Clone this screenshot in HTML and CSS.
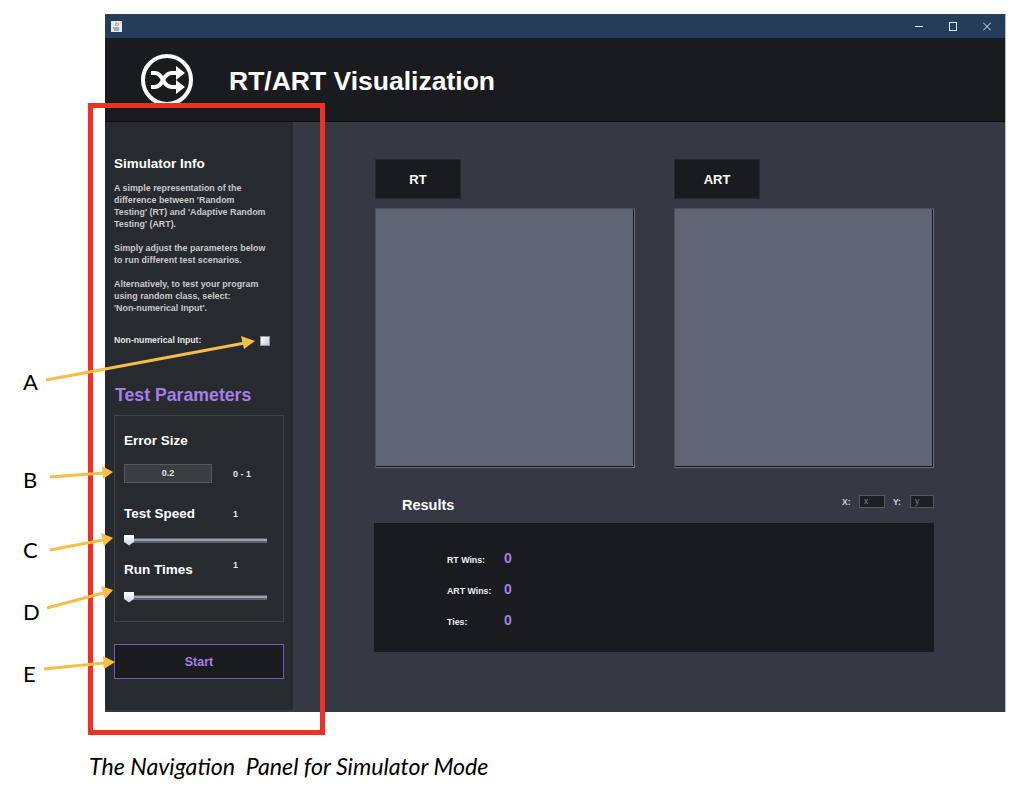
FILE: index.html
```html
<!DOCTYPE html>
<html lang="en">
<head>
    <meta charset="UTF-8">
    <meta name="viewport" content="width=device-width, initial-scale=1.0">
    <title>The Navigation Panel for Simulator Mode</title>
    <link rel="stylesheet" href="styles.css">
</head>
<body>
    <div class="page">
        <div class="window">
            <div class="titlebar">
                <svg class="java-icon" width="11" height="11" viewBox="0 0 11 11">
                    <rect width="11" height="11" fill="#e6e9ee"/>
                    <path d="M5 1c1 2-1 2 0 4M7 2c1 2-1 2 0 3" stroke="#d9792b" fill="none"/>
                    <path d="M2 7h6M3 9h5" stroke="#4a6fa5"/>
                </svg>
                <div class="window-controls">
                    <svg width="8" height="9" viewBox="0 0 8 9"><path d="M0 4.5h8" stroke="#dfe5ec"/></svg>
                    <svg width="8" height="9" viewBox="0 0 8 9"><rect x=".5" y=".5" width="7" height="8" fill="none" stroke="#dfe5ec"/></svg>
                    <svg width="8" height="9" viewBox="0 0 8 9"><path d="M0 .5l8 8M8 .5l-8 8" stroke="#dfe5ec"/></svg>
                </div>
            </div>

            <div class="app-header">
                <svg class="logo" width="52" height="52" viewBox="0 0 52 52">
                    <circle cx="26" cy="26" r="24" fill="none" stroke="#fff" stroke-width="4"/>
                    <path d="M10 19h4c4 0 6 3 8 7s4 7 9 7h5M10 33h4c4 0 6-3 8-7s4-7 9-7h5" fill="none" stroke="#fff" stroke-width="4"/>
                    <path d="M35 12l9 7-9 7zM35 26l9 7-9 7z" fill="#fff"/>
                </svg>
                <h1>RT/ART Visualization</h1>
            </div>

            <div class="app-body">
                <div class="sidebar">
                    <h2>Simulator Info</h2>
                    <div class="info">
                        <p>A simple representation of the<br>difference between 'Random<br>Testing' (RT) and 'Adaptive Random<br>Testing' (ART).</p>
                        <p>Simply adjust the parameters below<br>to run different test scenarios.</p>
                        <p>Alternatively, to test your program<br>using random class, select:<br>'Non-numerical Input'.</p>
                    </div>
                    <div class="check-row">
                        <span>Non-numerical Input:</span>
                        <div class="checkbox"></div>
                    </div>

                    <h3>Test Parameters</h3>
                    <div class="param-box">
                        <div class="param-label">Error Size</div>
                        <div class="error-row">
                            <div class="error-input">0.2</div>
                            <span class="param-value">0 - 1</span>
                        </div>
                        <div class="param-row speed-row">
                            <div class="param-label">Test Speed</div>
                            <span class="param-value">1</span>
                        </div>
                        <div class="slider speed-slider"><div class="thumb"></div></div>
                        <div class="param-row runs-row">
                            <div class="param-label">Run Times</div>
                            <span class="param-value">1</span>
                        </div>
                        <div class="slider runs-slider"><div class="thumb"></div></div>
                    </div>
                    <button class="start-btn">Start</button>
                </div>

                <div class="main">
                    <div class="boards">
                        <div class="board">
                            <div class="board-tab">RT</div>
                            <div class="board-canvas"></div>
                        </div>
                        <div class="board">
                            <div class="board-tab">ART</div>
                            <div class="board-canvas"></div>
                        </div>
                    </div>
                    <div class="results-head">
                        <div class="results-title">Results</div>
                        <div class="coords">
                            <span>X:</span>
                            <div class="coord-input">x</div>
                            <span>Y:</span>
                            <div class="coord-input coord-y">y</div>
                        </div>
                    </div>
                    <div class="results">
                        <div class="result-row"><span class="result-label">RT Wins:</span><span class="result-value">0</span></div>
                        <div class="result-row"><span class="result-label">ART Wins:</span><span class="result-value">0</span></div>
                        <div class="result-row"><span class="result-label">Ties:</span><span class="result-value">0</span></div>
                    </div>
                </div>
            </div>
        </div>

        <div class="caption">The Navigation&nbsp; Panel for Simulator Mode</div>

        <!-- figure annotations drawn over the screenshot -->
        <div class="red-frame"></div>
        <svg class="arrows" width="1020" height="796" viewBox="0 0 1020 796">
            <g stroke="#f8bd45" stroke-width="3" fill="none">
                <path d="M46 380L245 343"/>
                <path d="M50 477L103 473"/>
                <path d="M50 550L103 540"/>
                <path d="M47 608L103 593"/>
                <path d="M44 669L104 663"/>
            </g>
            <g fill="#f8bd45">
                <path d="M255 341L241 336L244 349z"/>
                <path d="M113 472L102 466L103 479z"/>
                <path d="M113 538L101 533L104 546z"/>
                <path d="M113 590L101 586L105 599z"/>
                <path d="M115 662L103 656L104 669z"/>
            </g>
        </svg>
        <div class="marker marker-a">A</div>
        <div class="marker marker-b">B</div>
        <div class="marker marker-c">C</div>
        <div class="marker marker-d">D</div>
        <div class="marker marker-e">E</div>
    </div>
</body>
</html>
```

FILE: styles.css
```css
* {
    box-sizing: border-box;
}
body {
    margin: 0;
    background-color: #fff;
    font-family: 'Liberation Sans', Arial, sans-serif;
}
h1, h2, h3, p {
    margin: 0;
}
.page {
    position: relative;
    width: 1020px;
    height: 796px;
    padding: 14px 0 0 89px;
    overflow: hidden;
}

/* app window */
.window {
    width: 901px;
    height: 698px;
    margin-left: 16px;
    border-top: 1px solid #3c3f44;
    border-right: 1px solid #b4bcc6;
    background-color: #363944;
}
.titlebar {
    display: flex;
    align-items: center;
    justify-content: space-between;
    height: 23px;
    padding: 0 14px 0 6px;
    background-color: #233d5b;
}
.java-icon {
    display: block;
}
.window-controls {
    display: flex;
    gap: 26px;
}
.window-controls svg {
    display: block;
}
.app-header {
    display: flex;
    align-items: center;
    height: 84px;
    padding: 0 0 0 36px;
    background-color: #1a1b1f;
    border-bottom: 1px solid #0d0e10;
}
.logo {
    display: block;
}
h1 {
    margin: 2px 0 0 36px;
    color: #fff;
    font-size: 26.5px;
    font-weight: bold;
    line-height: 32px;
}
.app-body {
    display: flex;
    align-items: flex-start;
}

/* sidebar */
.sidebar {
    width: 188px;
    height: 588px;
    padding: 34px 0 0 9px;
    background-color: #272a2f;
}
h2 {
    color: #fff;
    font-size: 13.5px;
    font-weight: bold;
    line-height: 16px;
}
.info {
    display: flex;
    flex-direction: column;
    gap: 12px;
    margin-top: 10px;
    color: #c8c9cb;
    font-size: 8.9px;
    font-weight: bold;
    line-height: 12px;
}
.check-row {
    display: flex;
    align-items: center;
    justify-content: space-between;
    width: 156px;
    height: 12px;
    margin-top: 20px;
    color: #e4e5e7;
    font-size: 8.7px;
    font-weight: bold;
}
.checkbox {
    width: 10px;
    height: 10px;
    margin-top: 2px;
    border: 1px solid #8e96a4;
    background-image: linear-gradient(to bottom right, #fff, #bfc8d8);
}
h3 {
    margin: 38px 0 9px 1px;
    color: #a57fe6;
    font-size: 17.7px;
    font-weight: bold;
    line-height: 22px;
}
.param-box {
    width: 170px;
    height: 207px;
    padding: 17px 0 0 9px;
    border: 1px solid #3f4246;
}
.param-label {
    width: 109px;
    color: #fff;
    font-size: 13.5px;
    font-weight: bold;
    line-height: 16px;
}
.param-value {
    color: #e4e5e7;
    font-size: 9px;
    font-weight: bold;
    line-height: 10px;
}
.error-row {
    display: flex;
    align-items: center;
    margin-top: 15px;
}
.error-input {
    width: 88px;
    height: 19px;
    margin-right: 21px;
    border: 1px solid #55585c;
    background-color: #3c3d41;
    color: #e4e5e7;
    font-size: 9px;
    font-weight: bold;
    line-height: 17px;
    text-align: center;
}
.param-row {
    display: flex;
}
.speed-row {
    align-items: center;
    margin-top: 23px;
}
.runs-row {
    align-items: flex-start;
    margin-top: 15px;
}
.runs-row .param-value {
    margin-top: -2px;
}
.slider {
    display: flex;
    align-items: center;
    width: 143px;
    height: 14px;
    background-image: linear-gradient(#5b6370 0 1px, #9aa3af 1px 3px, #5b6370 3px 5px);
    background-size: 100% 5px;
    background-position: 0 center;
    background-repeat: no-repeat;
}
.speed-slider {
    margin-top: 11px;
}
.runs-slider {
    margin-top: 12px;
}
.thumb {
    width: 10px;
    height: 11px;
    background-image: linear-gradient(#fff, #c9d0dc);
    clip-path: polygon(0 0, 100% 0, 100% 65%, 50% 100%, 0 65%);
}
.start-btn {
    display: block;
    width: 170px;
    height: 35px;
    margin-top: 22px;
    padding: 0;
    border: 1px solid #7b56b8;
    background-color: #1a1b1f;
    color: #a57fe6;
    font-family: inherit;
    font-size: 12.5px;
    font-weight: bold;
}

/* main area */
.main {
    width: 712px;
    padding: 37px 0 0 81px;
}
.boards {
    display: flex;
    gap: 39px;
    margin-left: 1px;
}
.board {
    width: 260px;
}
.board-tab {
    width: 86px;
    height: 40px;
    border: 1px solid #26282d;
    background-color: #1a1b1f;
    color: #fff;
    font-size: 13px;
    font-weight: bold;
    line-height: 39px;
    text-align: center;
}
.board-canvas {
    height: 260px;
    margin-top: 9px;
    border: 1px solid #4a4e5a;
    border-right-color: #6a707e;
    border-bottom-color: #6a707e;
    box-shadow: inset -1px -1px 0 #14161c;
    background-color: #5f6575;
}
.results-head {
    display: flex;
    align-items: flex-start;
    justify-content: space-between;
    width: 560px;
    height: 55px;
    padding: 27px 0 0 28px;
}
.results-title {
    color: #fff;
    font-size: 14.5px;
    font-weight: bold;
    line-height: 20px;
}
.coords {
    display: flex;
    align-items: center;
    color: #d0d4da;
    font-size: 8.5px;
    font-weight: bold;
}
.coords span {
    width: 17px;
}
.coord-input {
    width: 26px;
    height: 13px;
    margin-right: 8px;
    padding-left: 4px;
    border: 1px solid #55585f;
    background-color: #1e1f23;
    color: #7f8590;
    font-weight: normal;
    line-height: 11px;
}
.coord-y {
    width: 24px;
    margin-right: 0;
}
.results {
    width: 560px;
    height: 129px;
    padding: 21px 0 0 73px;
    background-color: #1a1b1f;
}
.result-row {
    display: flex;
    align-items: center;
    height: 31px;
}
.result-label {
    width: 57px;
    color: #f0f0f2;
    font-size: 8.8px;
    font-weight: bold;
}
.result-value {
    padding-bottom: 3px;
    color: #a57fe6;
    font-size: 14px;
    font-weight: bold;
}
.caption {
    margin-top: 39px;
    color: #000;
    font-family: Lato, sans-serif;
    font-size: 23.2px;
    font-style: italic;
    line-height: 30px;
}

/* annotations */
.red-frame {
    position: absolute;
    left: 88px;
    top: 103px;
    width: 237px;
    height: 632px;
    border: 5px solid #ee3124;
}
.arrows {
    position: absolute;
    left: 0;
    top: 0;
}
.marker {
    position: absolute;
    left: 23px;
    color: #000;
    font-family: Lato, sans-serif;
    font-size: 22px;
    line-height: 26px;
}
.marker-a { top: 369px; }
.marker-b { top: 467px; }
.marker-c { top: 537px; }
.marker-d { top: 599px; }
.marker-e { top: 661px; }
```
